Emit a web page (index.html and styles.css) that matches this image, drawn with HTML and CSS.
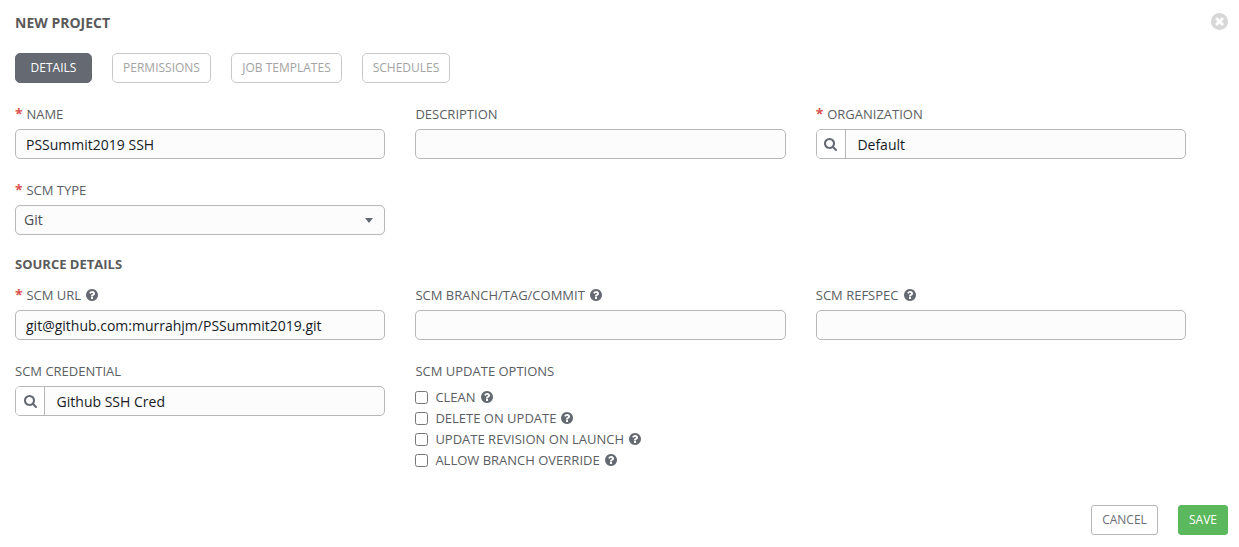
FILE: index.html
```html
<!DOCTYPE html>
<html lang="en">
<head>
<meta charset="utf-8">
<title>New Project</title>
<link rel="stylesheet" href="styles.css">
</head>
<body>
<svg class="sprite" aria-hidden="true">
  <symbol id="help" viewBox="128 128 1536 1536"><path d="M1024 1376v-192q0-14-9-23t-23-9h-192q-14 0-23 9t-9 23v192q0 14 9 23t23 9h192q14 0 23-9t9-23zM1280 704q0-88-55.500-163t-138.500-116-170-41q-243 0-371 213-15 24 8 42l132 100q7 6 19 6 16 0 25-12 53-68 86-92 34-24 86-24 48 0 85.500 26t37.500 59q0 38-20 61t-68 45q-63 28-115.500 86.500t-52.500 125.500v36q0 14 9 23t23 9h192q14 0 23-9t9-23q0-19 21.500-49.500t54.500-49.500q32-18 49-28.500t46-35 44.500-48 28-60.500 12.500-81zM1664 896q0 209-103 385.500t-279.500 279.500-385.500 103-385.500-103-279.500-279.500-103-385.500 103-385.500 279.500-279.500 385.500-103 385.500 103 279.500 279.500 103 385.500z"/></symbol>
  <symbol id="close" viewBox="128 128 1536 1536"><path d="M1277 1122q0-26-19-45l-181-181 181-181q19-19 19-45 0-27-19-46l-90-90q-19-19-46-19-26 0-45 19l-181 181-181-181q-19-19-45-19-27 0-46 19l-90 90q-19 19-19 46 0 26 19 45l181 181-181 181q-19 19-19 45 0 27 19 46l90 90q19 19 46 19 26 0 45-19l181-181 181 181q19 19 45 19 27 0 46-19l90-90q19-19 19-46zm387-226q0 209-103 385.500t-279.500 279.500-385.500 103-385.500-103-279.500-279.500-103-385.500 103-385.500 279.500-279.500 385.500-103 385.500 103 279.500 279.500 103 385.500z"/></symbol>
  <symbol id="search" viewBox="64 128 1664 1664"><path d="M1216 832q0-185-131.500-316.500t-316.500-131.500-316.500 131.500-131.500 316.500 131.500 316.500 316.500 131.500 316.500-131.500 131.500-316.500zm512 832q0 52-38 90t-90 38q-54 0-90-38l-343-342q-179 124-399 124-143 0-273.500-55.500t-225-150-150-225-55.500-273.500 55.500-273.500 150-225 225-150 273.500-55.500 273.500 55.500 225 150 150 225 55.500 273.500q0 220-124 399l343 343q37 37 37 90z"/></symbol>
</svg>
<main class="panel">
  <header class="header">
    <h1 class="title">NEW PROJECT</h1>
    <svg class="close"><use href="#close"/></svg>
  </header>
  <nav class="tabs">
    <button class="btn tab tab-active tab-details">DETAILS</button>
    <button class="btn tab tab-permissions">PERMISSIONS</button>
    <button class="btn tab tab-templates">JOB TEMPLATES</button>
    <button class="btn tab tab-schedules">SCHEDULES</button>
  </nav>
  <form class="form">
    <div class="grid">
      <div class="field">
        <div class="label"><span class="required">*</span>NAME</div>
        <div class="control"><span class="value">PSSummit2019 SSH</span></div>
      </div>
      <div class="field">
        <div class="label">DESCRIPTION</div>
        <div class="control"></div>
      </div>
      <div class="field">
        <div class="label"><span class="required">*</span>ORGANIZATION</div>
        <div class="control"><span class="lookup"><svg class="search"><use href="#search"/></svg></span><span class="value">Default</span></div>
      </div>
      <div class="field">
        <div class="label"><span class="required">*</span>SCM TYPE</div>
        <div class="control select"><span class="selected">Git</span><span class="caret"></span></div>
      </div>
    </div>
    <h2 class="subtitle">SOURCE DETAILS</h2>
    <div class="grid">
      <div class="field">
        <div class="label"><span class="required">*</span>SCM URL<svg class="help"><use href="#help"/></svg></div>
        <div class="control"><span class="value">git@github.com:murrahjm/PSSummit2019.git</span></div>
      </div>
      <div class="field">
        <div class="label">SCM BRANCH/TAG/COMMIT<svg class="help"><use href="#help"/></svg></div>
        <div class="control"></div>
      </div>
      <div class="field">
        <div class="label">SCM REFSPEC<svg class="help"><use href="#help"/></svg></div>
        <div class="control"></div>
      </div>
      <div class="field">
        <div class="label">SCM CREDENTIAL</div>
        <div class="control"><span class="lookup"><svg class="search"><use href="#search"/></svg></span><span class="value">Github SSH Cred</span></div>
      </div>
      <div class="field">
        <div class="label">SCM UPDATE OPTIONS</div>
        <div class="options">
          <label class="option"><input class="check" type="checkbox">CLEAN<svg class="help"><use href="#help"/></svg></label>
          <label class="option"><input class="check" type="checkbox">DELETE ON UPDATE<svg class="help"><use href="#help"/></svg></label>
          <label class="option"><input class="check" type="checkbox">UPDATE REVISION ON LAUNCH<svg class="help"><use href="#help"/></svg></label>
          <label class="option"><input class="check" type="checkbox">ALLOW BRANCH OVERRIDE<svg class="help"><use href="#help"/></svg></label>
        </div>
      </div>
    </div>
    <footer class="actions">
      <button class="btn cancel" type="button">CANCEL</button>
      <button class="btn save" type="button">SAVE</button>
    </footer>
  </form>
</main>
</body>
</html>
```
FILE: styles.css
```css
* { box-sizing: border-box; }
body {
  margin: 0;
  background: #fff;
  color: #5a5e63;
  font-family: "Open Sans", sans-serif;
  font-size: 13px;
}
.sprite { display: none; }
.panel { padding: 13px 11px 0 15px; }
.header {
  display: flex;
  justify-content: space-between;
  height: 20px;
}
.title {
  margin: 0;
  color: #5a5a5a;
  font-size: 14px;
  font-weight: 700;
  line-height: 20px;
}
.close { width: 17px; height: 17px; fill: #d7d7d7; }
.tabs { display: flex; gap: 20px; margin-top: 20px; }
.btn {
  height: 30px;
  padding: 0;
  border: 1px solid #c9c9c9;
  border-radius: 5px;
  background: #fff;
  color: #a3a3a3;
  font-family: inherit;
  font-size: 12px;
  line-height: 28px;
  text-align: center;
}
.tab-active { border-color: #646972; background: #646972; color: #fff; }
.tab-details { width: 77px; }
.tab-permissions { width: 99px; }
.tab-templates { width: 111px; }
.tab-schedules { width: 88px; }
.form { margin-top: 21px; }
.grid {
  display: grid;
  grid-template-columns: repeat(3, 370.4px);
  gap: 21px 30px;
}
.label, .option { display: flex; align-items: center; height: 20px; line-height: 20px; }
.label { margin-bottom: 5px; }
.required {
  width: 7px;
  margin-right: 4.4px;
  color: #d9534f;
  font-size: 14px;
  font-weight: 700;
}
.help { width: 12px; height: 12px; margin-left: 5px; fill: #646972; }
.control {
  display: flex;
  align-items: stretch;
  height: 30px;
  border: 1px solid #b7b7b7;
  border-radius: 5px;
  background: #fcfcfc;
  overflow: hidden;
}
.value {
  padding: 1px 0 0 10px;
  color: #161b1f;
  font-size: 14px;
  line-height: 28px;
}
.lookup {
  display: flex;
  align-items: center;
  justify-content: center;
  width: 29px;
  margin-right: 1.6px;
  border-right: 1px solid #b7b7b7;
  background: #fff;
}
.search { width: 13px; height: 13px; fill: #646972; }
.select {
  align-items: center;
  justify-content: space-between;
  padding: 0 11px 0 8px;
  color: #484c50;
  font-size: 14px;
}
.selected { line-height: 28px; }
.caret {
  border: 4px solid transparent;
  border-top: 5px solid #646972;
  border-bottom: 0;
}
.subtitle {
  height: 20px;
  margin: 19px 0 11px;
  color: #5a5a5a;
  font-size: 13px;
  font-weight: 700;
  line-height: 20px;
}
.options { display: grid; gap: 1px; padding-top: 1px; }
.check {
  width: 13px;
  height: 13px;
  margin: 0 7px 0 0;
}
.actions {
  display: flex;
  justify-content: flex-end;
  gap: 20px;
  margin-top: 35px;
}
.cancel { width: 67px; border-color: #b7b7b7; border-radius: 3px; color: #6b6f74; }
.save { width: 50px; border-color: #5cb85c; border-radius: 3px; background: #5cb85c; color: #fff; }
```
